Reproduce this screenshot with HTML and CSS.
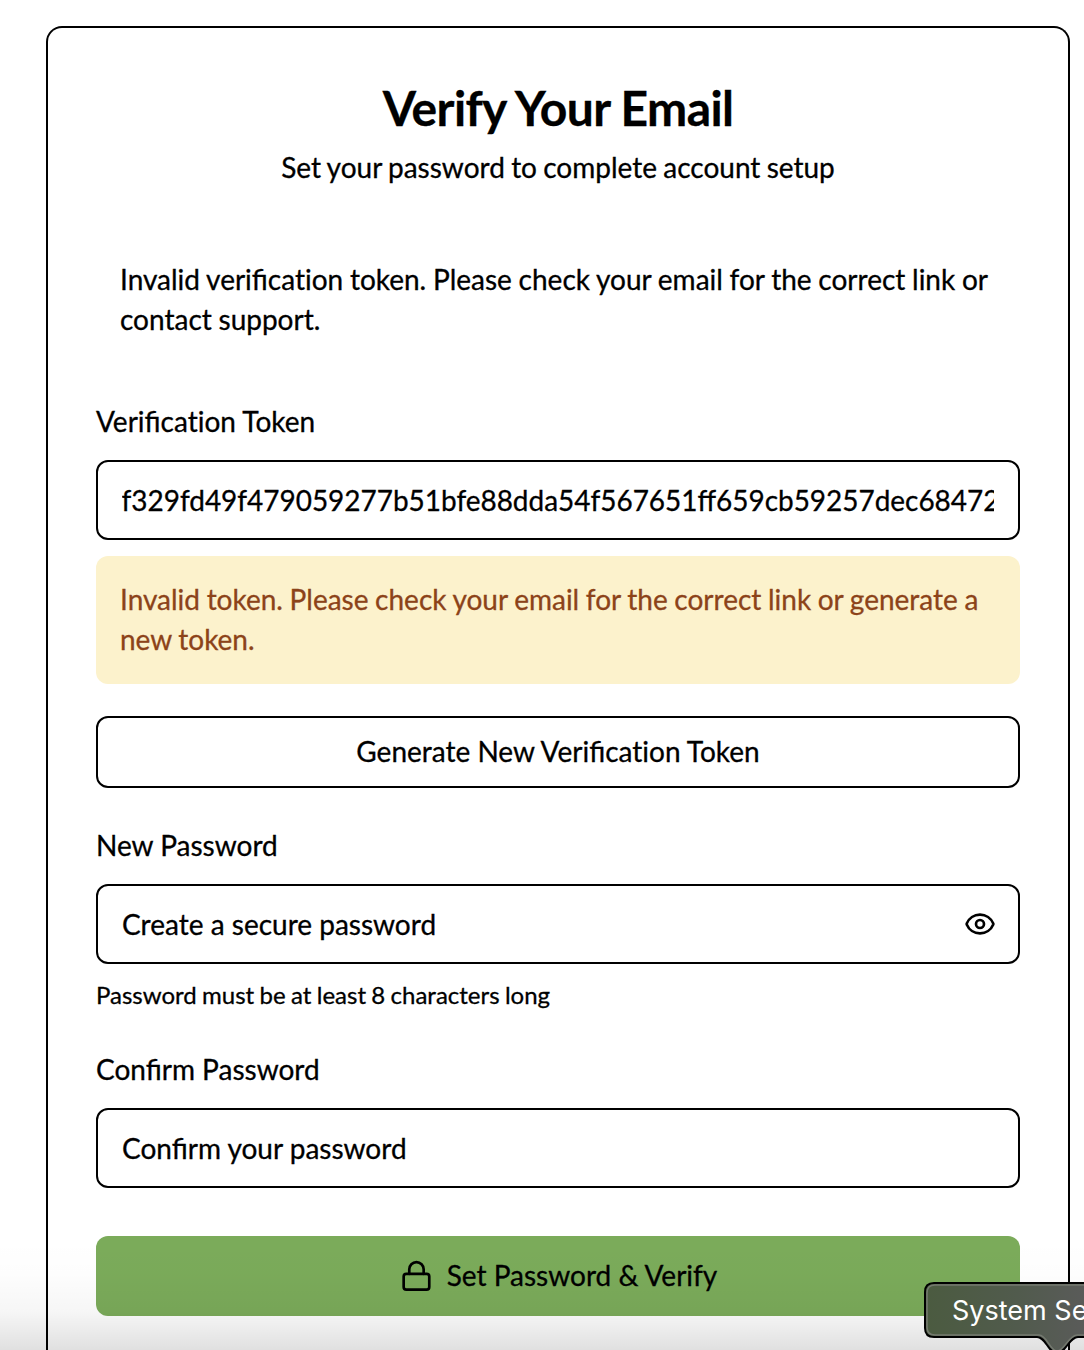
FILE: index.html
```html
<!DOCTYPE html>
<html lang="en">
<head>
<meta charset="utf-8">
<title>Verify Your Email</title>
<link rel="stylesheet" href="styles.css">
</head>
<body>
<main class="card">
  <header class="header">
    <h1 class="title">Verify Your Email</h1>
    <p class="subtitle">Set your password to complete account setup</p>
  </header>
  <p class="message">Invalid verificat&zwnj;ion token. Please check your email for the correct link or contact support.</p>
  <form class="form">
    <label class="label" for="token">Verificat&zwnj;ion Token</label>
    <div class="field"><input class="input token" id="token" type="text" value="f329fd49f479059277b51bfe88dda54f567651ff659cb59257dec68472a1"></div>
    <p class="warning">Invalid token. Please check your email for the correct link or generate a new token.</p>
    <button class="button outline" type="button">Generate New Verificat&zwnj;ion Token</button>
    <label class="label" for="password">New Password</label>
    <div class="field">
      <input class="input" id="password" type="password" placeholder="Create a secure password">
      <svg class="icon" viewBox="0 0 24 24" aria-hidden="true"><path d="M2.06 12.35a1 1 0 0 1 0-.7 10.75 10.75 0 0 1 19.88 0 1 1 0 0 1 0 .7 10.75 10.75 0 0 1-19.88 0"/><circle cx="12" cy="12" r="3"/></svg>
    </div>
    <p class="hint">Password must be at least 8 characters long</p>
    <label class="label" for="confirm">Confirm Password</label>
    <div class="field"><input class="input" id="confirm" type="password" placeholder="Confirm your password"></div>
    <button class="button primary" type="button">
      <svg class="icon lock" viewBox="0 0 24 24" aria-hidden="true"><rect x="2" y="10.4" width="19.2" height="11.8" rx="2"/><path d="M6.2 10.4V7a5.4 5.4 0 0 1 10.8 0v3.4"/></svg>
      <span>Set Password &amp; Verify</span>
    </button>
  </form>
</main>
<div class="shade"></div>
<div class="tooltip">
  <svg class="bubble" viewBox="0 0 160 70" aria-hidden="true">
    <defs><linearGradient id="bubble-fill" x1="0" x2="1"><stop offset="0" stop-color="#4b5b40"/><stop offset=".55" stop-color="#515b4d"/><stop offset="1" stop-color="#5b5b5b"/></linearGradient></defs>
    <path class="edge" d="M170 1H10Q1 1 1 10V46Q1 55 10 55H113C122 55 124 71 133 71S145 55 154 55H170Z"/>
    <path class="glint" d="M170 3H11Q3 3 3 11V45Q3 53 11 53H115C123 53 126 69 133 69S145 53 153 53H170"/>
  </svg>
  <span class="tooltip-text">System Se</span>
</div>
</body>
</html>
```
FILE: styles.css
```css
* {
  box-sizing: border-box;
}

body {
  margin: 0;
  height: 1350px;
  padding: 26px 14px 0 46px;
  overflow: hidden;
  position: relative;
  background: #fff;
  color: #000;
  font: 400 28px/40px Lato, sans-serif;
  -webkit-text-stroke: .3px currentColor;
}

h1,
p {
  margin: 0;
}

.card {
  height: 1324px;
  padding: 48px 48px 0;
  border: 2px solid #000;
  border-bottom: 0;
  border-radius: 16px 16px 0 0;
}

.header {
  display: flex;
  flex-direction: column;
  gap: 7px;
  text-align: center;
}

.title {
  font-size: 48px;
  line-height: 64px;
  font-weight: 700;
  letter-spacing: -.6px;
}

.subtitle {
  word-spacing: -.9px;
}

.message {
  margin-top: 48px;
  padding: 24px;
  word-spacing: -.45px;
}

.form {
  display: flex;
  flex-direction: column;
  padding-top: 44px;
}

.label {
  line-height: 28px;
}

.field {
  display: flex;
  align-items: center;
  height: 80px;
  margin-top: 25px;
  padding: 0 24px;
  border: 2px solid #000;
  border-radius: 12px;
}

.input {
  flex: 1;
  min-width: 0;
  height: 40px;
  padding: 0;
  border: 0;
  outline: 0;
  background: transparent;
  color: #000;
  font: inherit;
}

.token {
  font-size: 27.95px;
  text-indent: -.5px;
}

.input::placeholder {
  color: #000;
  opacity: 1;
}

.icon {
  flex: none;
  width: 32px;
  height: 32px;
  margin-right: -2px;
  fill: none;
  stroke: #000;
  stroke-width: 2;
  stroke-linecap: round;
  stroke-linejoin: round;
}

.warning {
  margin-top: 16px;
  padding: 23px 24px 25px;
  border-radius: 12px;
  background: #fcf2cc;
  color: #8c4319;
  word-spacing: -.55px;
}

.button {
  display: flex;
  align-items: center;
  justify-content: center;
  padding: 0 0 2px;
  border: 0;
  border-radius: 12px;
  color: #000;
  font: inherit;
}

.outline {
  height: 72px;
  margin: 32px 0 43px;
  border: 2px solid #000;
  background: #fff;
}

.hint {
  margin: 15px 0 44px;
  font-size: 24px;
  line-height: 32px;
  word-spacing: -.8px;
}

.primary {
  height: 80px;
  margin-top: 48px;
  gap: 16px;
  background: #7bab5a;
}

.lock {
  margin: 2px -2px 0 2px;
}

.shade {
  position: absolute;
  inset: 1240px 0 0;
  background: linear-gradient(rgba(0, 0, 0, 0), rgba(0, 0, 0, .008) 30%, rgba(0, 0, 0, .035) 65%, rgba(0, 0, 0, .12));
}

.tooltip {
  position: absolute;
  left: 924px;
  top: 1282px;
  width: 160px;
  height: 68px;
  overflow: hidden;
}

.bubble {
  display: block;
  width: 160px;
  height: 70px;
}

.edge {
  fill: url(#bubble-fill);
  stroke: #000;
  stroke-width: 2;
}

.glint {
  fill: none;
  stroke: #74796f;
  stroke-width: 1.5;
}

.tooltip-text {
  position: absolute;
  left: 28px;
  top: 9px;
  color: #fff;
  font: 400 27px/40px Inter, sans-serif;
  -webkit-text-stroke: 0;
  white-space: nowrap;
}
```
